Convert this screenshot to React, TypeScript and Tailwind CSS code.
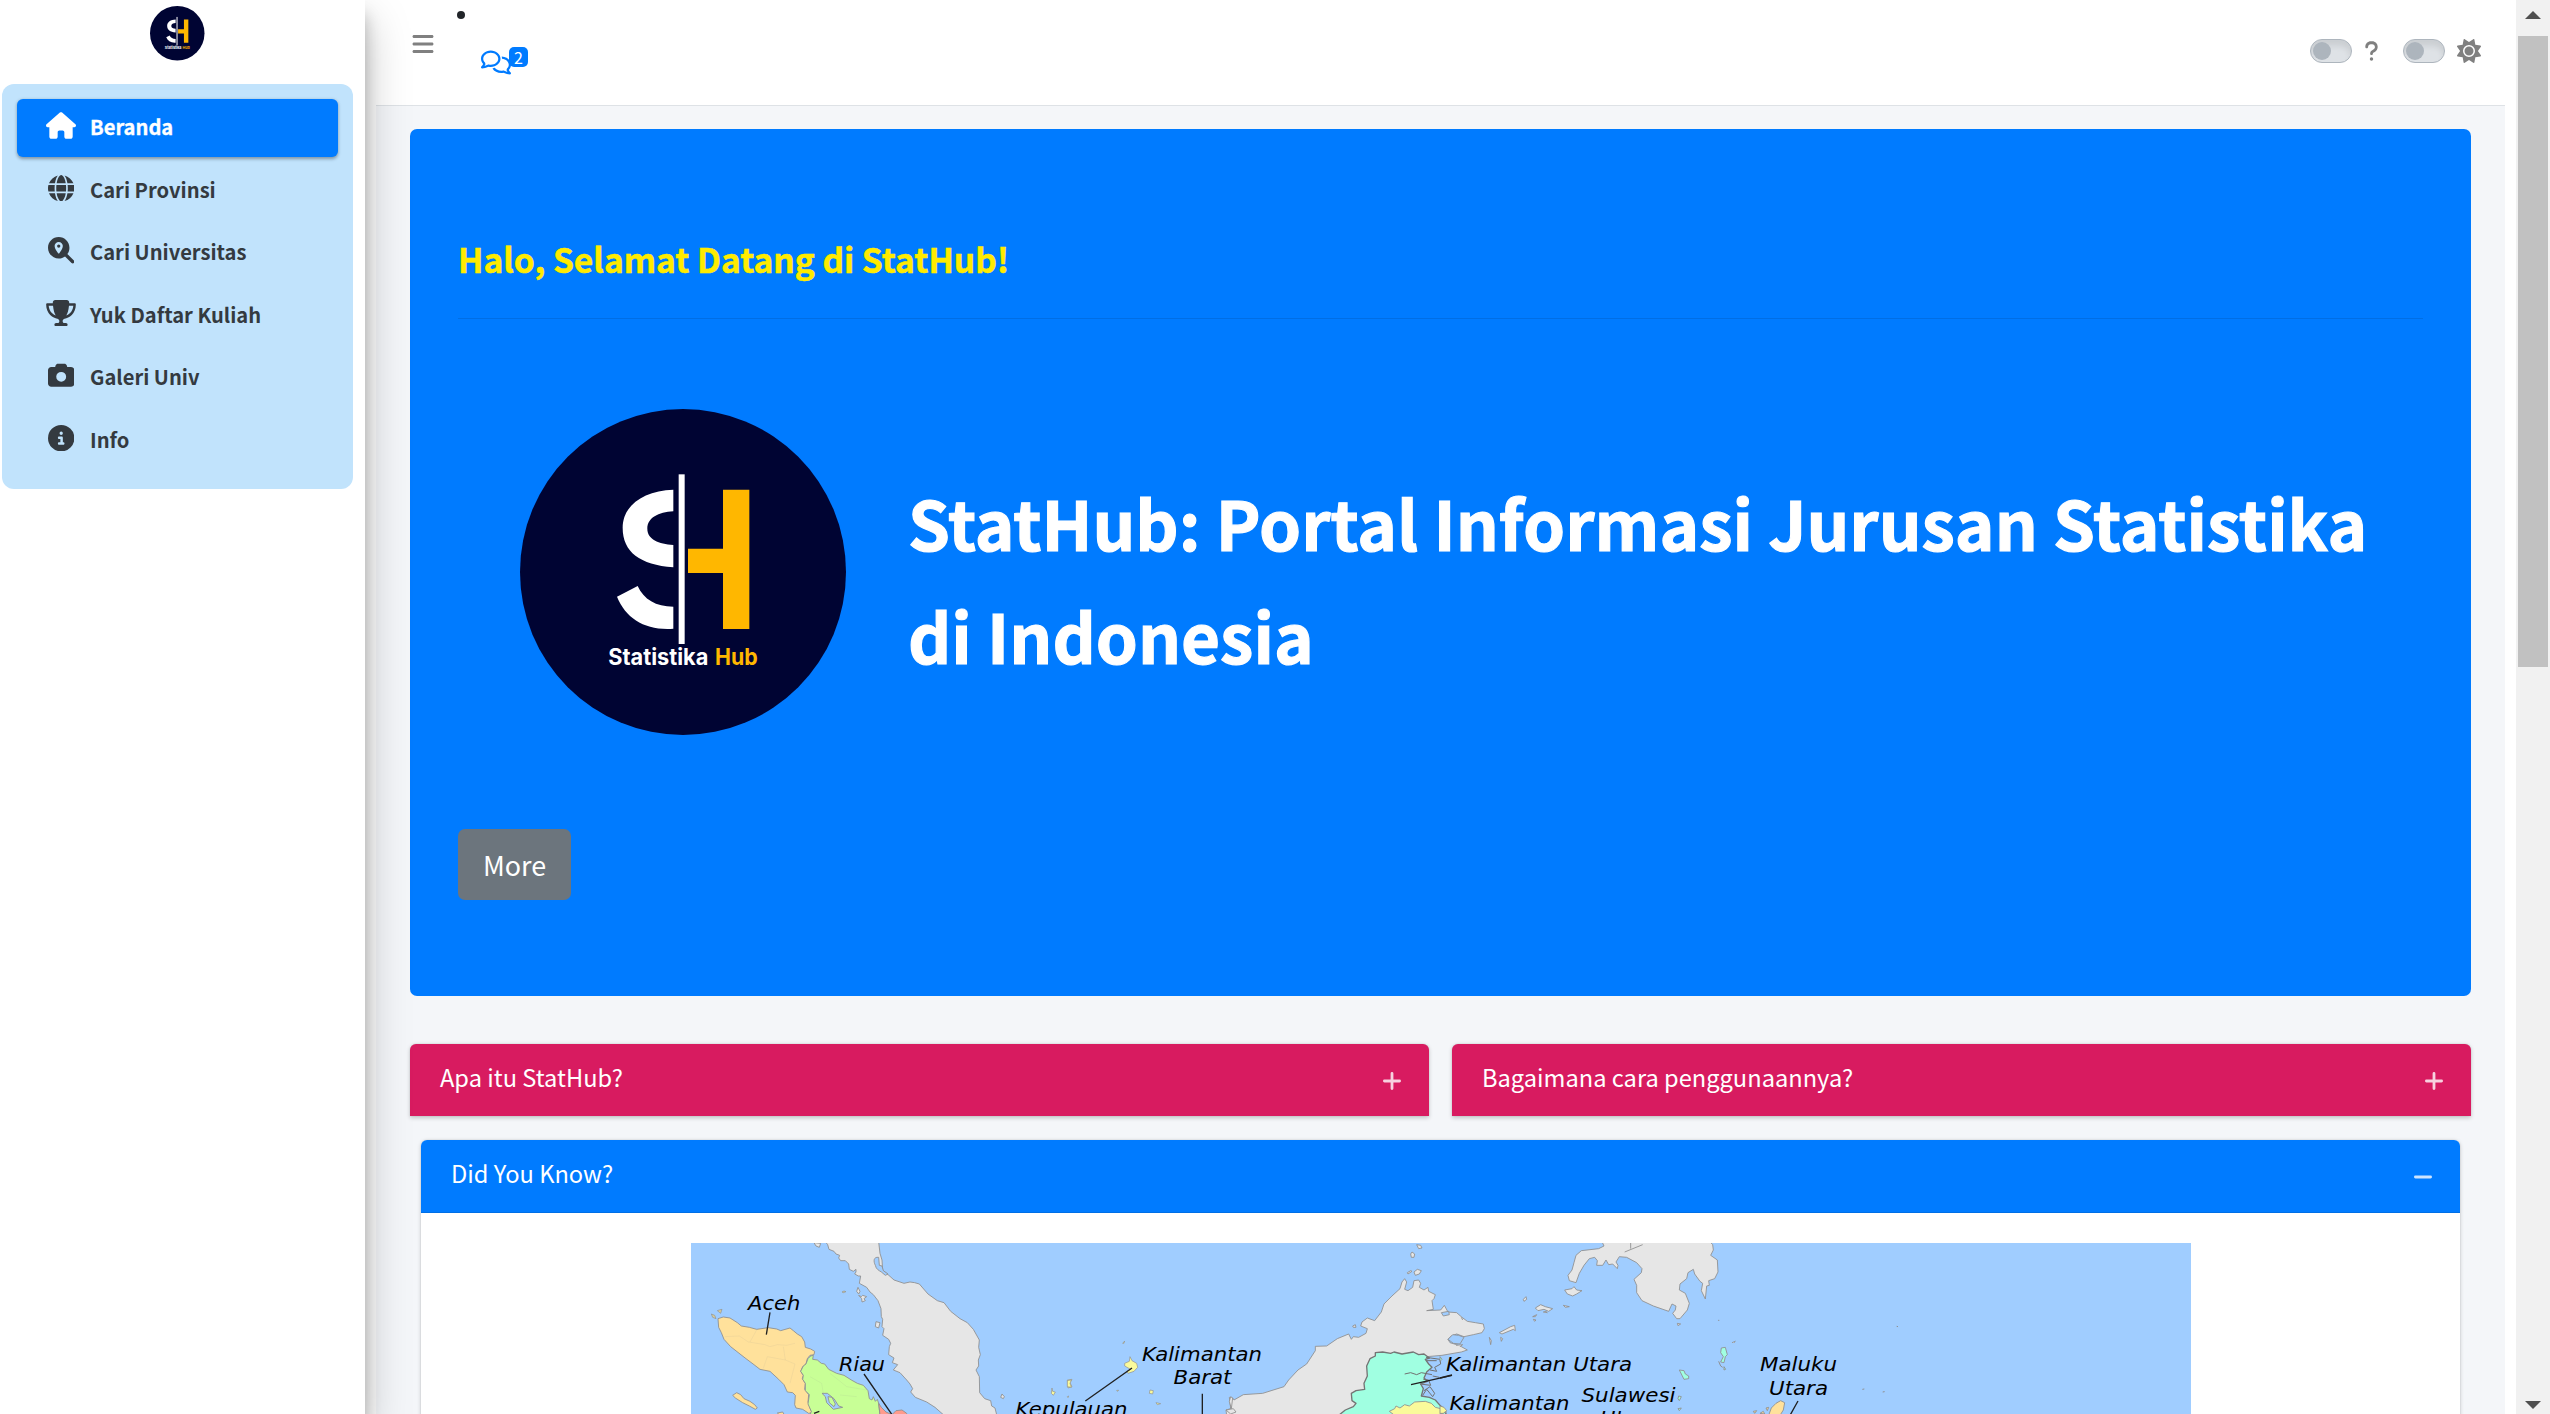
import type { ReactNode } from "react";
import {
  FaBars,
  FaCamera,
  FaCircleInfo,
  FaGlobe,
  FaHouse,
  FaMagnifyingGlassLocation,
  FaQuestion,
  FaRegComments,
  FaSun,
  FaTrophy,
} from "react-icons/fa6";

function Logo({ className }: { className: string }) {
  return (
    <svg viewBox="60 57 978 978" className={className} role="img" aria-label="Statistika Hub">
      <circle cx="549" cy="546" r="489" fill="#000433" />
      <path
        d="M520 299V364C475 366 442 384 442 416C442 448 476 462 520 465V532C420 524 368 486 368 413C368 346 432 301 520 299Z"
        fill="#fff"
      />
      <path d="M413 588C431 628 468 650 520 650V716C436 722 378 686 351 620Z" fill="#fff" />
      <rect x="536" y="253" width="18" height="509" fill="#fff" />
      <path d="M669 299H748V717H669V549H564V476H669Z" fill="#ffb700" />
      <g fontFamily="Inter, sans-serif" fontSize="67" fontWeight="700">
        <text x="325" y="825" textLength="300" lengthAdjust="spacingAndGlyphs" fill="#fff">
          Statistika
        </text>
        <text x="645" y="825" textLength="128" lengthAdjust="spacingAndGlyphs" fill="#ffb700">
          Hub
        </text>
      </g>
    </svg>
  );
}

const menu: { label: string; icon: ReactNode; active?: boolean }[] = [
  { label: "Beranda", icon: <FaHouse className="h-[27px] w-[30px]" />, active: true },
  { label: "Cari Provinsi", icon: <FaGlobe className="size-[26.4px]" /> },
  { label: "Cari Universitas", icon: <FaMagnifyingGlassLocation className="size-[26.4px]" /> },
  { label: "Yuk Daftar Kuliah", icon: <FaTrophy className="h-[26.4px] w-[30px]" /> },
  { label: "Galeri Univ", icon: <FaCamera className="size-[26.4px]" /> },
  { label: "Info", icon: <FaCircleInfo className="size-[26.4px]" /> },
];

function Sidebar() {
  return (
    <aside className="relative z-10 flex w-[365px] shrink-0 flex-col bg-white shadow-[0_21px_42px_rgba(0,0,0,0.25),0_15px_15px_rgba(0,0,0,0.22)]">
      <div className="flex h-[84px] w-[355px] justify-center pt-[6px]">
        <Logo className="size-[54.5px]" />
      </div>
      <nav className="ml-[2px] flex h-[405px] w-[351px] flex-col gap-[4.5px] rounded-xl bg-[#c1e3fc] p-[15px]">
        {menu.map((item) => (
          <a
            key={item.label}
            className={
              item.active
                ? "flex h-[58px] w-[321px] shrink-0 items-start rounded-[6px] bg-[#007bff] pl-[29px] text-white shadow-[0_1.5px_4.5px_rgba(0,0,0,0.12),0_1.5px_3px_rgba(0,0,0,0.24)] [-webkit-text-stroke:0.3px_currentColor]"
                : "flex h-[58px] w-[321px] shrink-0 items-start pl-[29px] text-[#343a40]"
            }
          >
            <span className="mt-[13px] -ml-[0.5px] flex h-[27px] w-[31px] items-center justify-center">{item.icon}</span>
            <span className="pl-[13.5px] text-[20.15px] leading-[56px] font-bold">{item.label}</span>
          </a>
        ))}
      </nav>
    </aside>
  );
}

function Toggle() {
  return (
    <span className="flex h-[24px] w-[42px] items-center rounded-full border-[1.5px] border-[#adb5bd] bg-[#dee2e6] pl-[2px] shadow-[inset_0_6px_6px_rgba(0,0,0,0.09)]">
      <span className="size-[18px] rounded-full bg-[#adb5bd]" />
    </span>
  );
}

function Navbar() {
  return (
    <header className="flex h-[106px] shrink-0 justify-between border-b border-[#dee2e6] bg-white">
      <div className="flex">
        <FaBars className="mt-[32px] ml-[35px] size-[24px] text-[#808080]" />
        <span className="mt-[11px] ml-[22px] size-[8px] rounded-full bg-[#212529]" />
        <div className="relative mt-[49px] ml-[16px] h-[26px] w-[48px] text-[#007bff]">
          <FaRegComments className="mt-px h-[25px] w-[30px]" />
          <span className="absolute -top-[2px] left-[28px] h-[20px] w-[19px] rounded-[5px] bg-[#007bff] text-center text-[16px] leading-[20px] text-white">
            2
          </span>
        </div>
      </div>
      <div className="flex h-[102px] items-center pr-[24px] text-[#808080]">
        <Toggle />
        <FaQuestion className="ml-[12px] h-[22px] w-[15px]" />
        <span className="w-[24px]" />
        <Toggle />
        <FaSun className="ml-[12px] size-[24px]" />
      </div>
    </header>
  );
}

function Sign({ minus }: { minus?: boolean }) {
  return (
    <svg viewBox="0 0 18 18" className="mt-[2px] size-[18px]" stroke="#fff" strokeOpacity="0.8" strokeWidth="2.8" strokeLinecap="round">
      <path d={minus ? "M1.4 9H16.6" : "M1.4 9H16.6M9 1.4V16.6"} />
    </svg>
  );
}

function InfoCard({ title }: { title: string }) {
  return (
    <section className="flex h-[72px] w-[1019px] items-center justify-between rounded-t-[6px] bg-[#d81b60] pr-[28px] pl-[30px] text-white shadow-[0_1.5px_4.5px_rgba(0,0,0,0.2),0_0_1.5px_rgba(0,0,0,0.125)]">
      <h3 className="h-[72px] text-[23.65px] leading-[66px]">{title}</h3>
      <Sign />
    </section>
  );
}

function MapLabel({ x, y, w, children }: { x: number; y: number; w: number; children: string }) {
  return (
    <text x={x} y={y} textLength={w} lengthAdjust="spacingAndGlyphs">
      {children}
    </text>
  );
}

function IndonesiaMap() {
  return (
    <svg viewBox="691 1243 1500 171" className="h-[171px] w-[1500px] shrink-0 bg-[#a0cdff]" stroke="#8f8f8f" strokeWidth="2.6" strokeLinejoin="round">
      {/* Sumatra and the Malay peninsula */}
      <g transform="translate(680 1230) scale(0.33333)">
        <path fill="#e6e6e6" d="M436 35L443 44L447 58L462 64L468 72L479 76L476 84L482 92L496 92L506 102L508 118L520 124L528 118V126L524 132L535 138L542 138L538 160L560 172L570 186L580 194L594 212L603 236L604 260L608 268L606 290L612 296L608 316L626 328L632 340L628 350L626 374L642 384L637 398L653 404L640 420L660 428L680 450L690 462L698 476L692 486L706 502L740 516L765 532L790 554H950L945 534L935 528L932 512L914 506L899 488L898 440L888 420L896 408L895 390L901 374L896 352L898 330L880 298L862 278L840 266L812 244L792 218L772 212L744 192L718 162L704 158L690 156L672 160L642 150L622 132L608 120L606 90L600 70L596 35Z" />
        <path fill="#a0cdff" d="M596 82C580 80 580 94 586 106C588 118 598 122 604 126L616 136L624 132L610 122L606 108L598 106Z" />
        <path fill="#e6e6e6" d="M402 38L408 48L418 52L422 40ZM534 172L530 184L536 192L540 184ZM536 196L545 206L546 216L556 212L552 206L560 200L548 196L544 200ZM588 275L586 290L596 294L600 278ZM966 492L962 502L970 506L973 500Z" />
        <path fill="#ffe19b" d="M114 266L130 261L150 264L172 278L184 288L208 292L230 298L265 293L290 297L302 302L330 294L340 302L352 312L365 320L374 336L376 352L392 357L404 364L402 374L390 376L382 386L378 402L368 410L362 424L370 436L367 446L376 460L374 478L386 494L384 516L390 534L396 548L386 550L368 538L348 534L344 524L346 496L338 488L322 486L312 464L296 448L270 424L240 418L222 404L198 386L180 372L152 350L132 328L124 308L116 292Z" />
        <path fill="#c8ff96" d="M390 556L394 544L384 522L388 494L376 482L376 460L368 448L370 436L362 424L370 408L378 402L384 386L392 378L400 376L398 388L412 390L424 400L434 402L446 418L470 430L492 436L514 450L532 460L550 466L564 482L568 506L576 510L580 500L586 514L592 508L596 520L600 556Z" />
        <path fill="#a0cdff" d="M426 490L442 490L462 506L476 528L488 532L460 538L440 518L436 500Z" />
        <path fill="#c8ff96" d="M444 500L456 502L466 522L462 530L448 518Z" />
        <path fill="#ff9b8c" d="M596 520L604 532L618 546L636 554H600ZM636 554L648 542L666 540L680 550V556Z" />
        <path fill="#ffe19b" d="M158 496L170 488L182 494L192 506L210 514L224 524L232 534L226 538L208 528L188 518L166 504ZM292 549L308 546L314 556H300Z" />
        <path fill="#d9cf9a" strokeWidth="2" d="M94 252L104 256L108 266L98 262ZM112 242L118 240L126 238L122 250ZM486 186L492 183L498 185L490 188Z" />
        <path fill="#fafa9b" strokeWidth="2" d="M1116 474L1118 484L1126 486L1120 496L1114 490ZM1162 450L1176 448L1170 458L1176 470L1164 474ZM1162 500L1166 498L1164 503Z" />
        <path fill="none" strokeWidth="2" strokeOpacity="0.15" d="M135 320L178 318L205 336L255 344L270 350L292 344L320 346L345 340M230 300L210 336M310 350L316 390L262 380M262 380L250 415M316 390L345 402L330 460M390 440L425 460L430 490M450 430L500 470L560 480M480 495L530 500" />
        <path stroke="#202020" strokeWidth="4" fill="none" d="M270 247L259 314M552 432L636 554M402 550L418 544" />
      </g>
      {/* Borneo */}
      <g transform="translate(1060 1230) scale(0.33333)">
        <path fill="#e6e6e6" d="M500 556L498 540L512 536L508 502L518 504L522 510L550 494L608 490L672 470L686 450L714 420L740 402L766 362V349L800 348L832 326L866 312L874 328L880 320L896 322L918 310L922 296L902 288L906 276L922 264L944 272L964 246L972 222L996 198L1020 176L1026 156L1034 146L1040 156L1034 178L1044 182L1058 172L1062 152L1076 150L1082 160L1078 172L1092 180L1104 172L1106 184L1126 194L1122 206L1116 212L1120 238L1100 242L1142 240L1153 226L1164 246L1190 248L1206 262L1222 274L1246 278L1270 282L1273 296L1266 308L1240 314L1212 320L1190 312L1174 318L1164 328L1170 338L1190 344L1204 350L1222 360L1204 366L1146 376L1100 380L950 556Z" />
        <path fill="#a0cdff" d="M1144 248L1166 244L1168 254L1150 258ZM1164 328L1178 314L1196 316L1212 322L1200 342L1180 340Z" />
        <path fill="#a0ffe1" stroke="#747474" strokeWidth="4" d="M836 556L856 540L880 530L888 520L876 512L874 490L888 482L914 478L912 460L922 438L920 408L930 386L946 378V368L968 366L992 370L1002 366L1026 372L1060 366L1076 374L1092 372L1108 384L1096 388L1106 402L1116 412L1100 426L1092 444L1102 454L1082 462L1090 476L1084 498L1108 502L1126 510L1140 526L1152 538L1160 556Z" />
        <path fill="#fafa9b" d="M1004 556L988 544L1004 536L1008 528L1020 534L1034 524L1048 528L1064 516L1096 514L1114 520L1126 532L1150 538L1160 546L1140 552L1130 556Z" />
        <path fill="none" stroke="#707070" strokeWidth="3" d="M1034 432L1052 428L1070 434L1084 428L1116 434M1098 382L1140 388L1142 402L1124 412L1130 424L1110 420M1080 462L1112 466L1106 450L1090 448M1092 482L1110 470L1124 490L1118 500L1100 478L1088 496M1118 438L1138 442M1100 392L1130 392" />
        <path fill="#e6e6e6" d="M1056 66L1064 72L1062 82L1054 82L1052 72ZM1070 44L1082 46L1086 54L1076 56ZM1062 126L1072 118L1084 122L1078 132L1066 136ZM1042 128L1052 122L1056 124L1044 132ZM878 288L886 284L888 292L880 292ZM512 500L518 504L514 536L508 514ZM498 540L520 536L528 546L512 552Z" />
        <path fill="#fafa9b" strokeWidth="2" d="M210 380L216 392L230 400L233 412L222 424L204 430L200 424L212 418L194 408V400L208 394ZM22 452L34 450L30 460L34 472L22 470ZM270 480L280 482L278 492L268 490ZM170 481H176L172 484ZM288 518L302 521L292 524ZM188 340L194 333L192 340Z" />
        <path stroke="#202020" strokeWidth="4" d="M216 414L76 513M427 491V556M1053 464L1176 436" />
      </g>
      {/* Mindanao and the eastern islands */}
      <g transform="translate(1440 1230) scale(0.33333)">
        <path fill="#e6e6e6" d="M486 35L492 48L476 56L424 62L408 76L402 98L396 120L384 136L388 152L408 158L418 130L432 106L448 86L464 82L472 92L470 106L488 106L498 90L506 104L518 102L532 116L534 106L528 96L538 80L560 82L590 98L606 116L604 128L582 148L590 166V188L606 212L640 228L686 244L696 222L708 228L706 240L698 250L710 266L720 266L742 240L748 220L736 190L718 180L720 162L740 146L744 128L760 118L764 132L780 154L788 160L784 182L796 207L800 168L808 166L806 152L824 146L834 126L832 90L812 76L820 60L818 44L810 35Z" />
        <path fill="none" d="M554 66L608 44M572 35V56" />
        <path fill="#e6e6e6" d="M374 180L396 176L402 170L410 180L426 182L410 192L398 198L382 192ZM286 234L302 224L316 230L338 236L326 244L312 238L294 242ZM310 246L318 244L322 248ZM250 208L258 200L260 208L252 214ZM370 226L388 230L376 232ZM278 260L290 254L286 260ZM280 268L288 270L284 274ZM178 308L212 290L224 286L226 302L220 298L186 312ZM148 322L154 332L152 344ZM182 322L188 326L184 334ZM712 280L722 282L714 287ZM834 271H838M876 338L886 334L882 338M64 262L68 270M48 346L68 344L60 350" />
        <path fill="#a0ffe1" d="M844 354L856 352L862 374L856 380L852 398L842 396L850 380L842 368ZM852 410L857 418L852 420ZM718 420L732 422L736 432L746 438V446L732 448ZM716 498L724 500L718 512L714 506ZM714 536L724 534L718 542ZM0 380L6 388L0 394Z" />
        <path fill="none" d="M836 394L842 408L848 412M1370 289L1374 290M1267 478L1273 477M1328 486L1334 485" strokeWidth="3" />
        <path fill="#fafa9b" d="M0 528L12 532L20 542L10 550H0Z" />
        <path fill="#ffe19b" d="M1008 520L1022 512L1034 518L1030 540L1020 556H986L994 534ZM940 544L950 542L944 550ZM960 550L970 544L974 552ZM978 534L986 532L982 542Z" />
        <path stroke="#202020" strokeWidth="4" d="M0 444L36 435M1074 513L1050 556" />
      </g>
      <g fill="#000" stroke="none" fontFamily="DejaVu Sans, sans-serif" fontSize="19" fontStyle="italic">
        <MapLabel x={748} y={1310} w={52.5}>Aceh</MapLabel>
        <MapLabel x={839} y={1370.5} w={46}>Riau</MapLabel>
        <MapLabel x={1015.5} y={1415.5} w={112}>Kepulauan</MapLabel>
        <MapLabel x={1142} y={1361} w={120}>Kalimantan</MapLabel>
        <MapLabel x={1173.5} y={1384} w={58}>Barat</MapLabel>
        <MapLabel x={1446} y={1371} w={186}>Kalimantan Utara</MapLabel>
        <MapLabel x={1449.5} y={1410} w={120}>Kalimantan</MapLabel>
        <MapLabel x={1581.5} y={1402} w={94}>Sulawesi</MapLabel>
        <MapLabel x={1600} y={1425} w={58}>Utara</MapLabel>
        <MapLabel x={1760} y={1371} w={77}>Maluku</MapLabel>
        <MapLabel x={1769} y={1394.5} w={59}>Utara</MapLabel>
      </g>
    </svg>
  );
}

function Scrollbar() {
  return (
    <div className="flex w-[34px] shrink-0 flex-col items-center bg-[#f1f1f1]">
      <svg viewBox="0 0 16 8" className="mt-[11px] h-[8px] w-[16px]" fill="#505050">
        <path d="M0 8L8 0L16 8Z" />
      </svg>
      <div className="mt-[17px] h-[631px] w-[30px] bg-[#c1c1c1]" />
      <svg viewBox="0 0 16 8" className="mt-auto mb-[5px] h-[8px] w-[16px]" fill="#505050">
        <path d="M0 0L8 8L16 0Z" />
      </svg>
    </div>
  );
}

export default function App() {
  return (
    <div className="flex h-[1414px] w-[2550px] overflow-hidden bg-white font-['Noto_Sans_CJK_SC',sans-serif]">
      <Sidebar />
      <div className="ml-[11px] flex w-[2129px] shrink-0 flex-col bg-[#f4f6f9]">
        <Navbar />
        <main className="flex flex-col pt-[23px] pl-[34px]">
          <section className="flex h-[867px] w-[2061px] flex-col rounded-[7px] bg-[#007bff] px-[48px] pt-[96px]">
            <h2 className="h-[93px] text-[33.55px] leading-[68px] font-bold text-[#ffeb00] [-webkit-text-stroke:0.5px_currentColor]">
              Halo, Selamat Datang di StatHub!
            </h2>
            <hr className="border-t-[1.5px] border-black/10" />
            <div className="mt-[90px] flex h-[326px] items-start pl-[62px]">
              <Logo className="size-[326px] shrink-0" />
              <h1 className="mt-[56px] ml-[62px] w-[1500px] text-[67.3px] leading-[113px] font-bold text-white [-webkit-text-stroke:1.1px_currentColor]">
                StatHub: Portal Informasi Jurusan Statistika
                <br />
                di Indonesia
              </h1>
            </div>
            <button className="mt-[94px] h-[71px] w-[113px] rounded-[7px] bg-[#6c757d] text-[26.9px] leading-[71px] text-white">
              More
            </button>
          </section>
          <div className="mt-[48px] flex gap-[23px]">
            <InfoCard title="Apa itu StatHub?" />
            <InfoCard title="Bagaimana cara penggunaannya?" />
          </div>
          <section className="mt-[24px] ml-[11px] flex h-[280px] w-[2039px] flex-col rounded-t-[6px] bg-white shadow-[0_1.5px_4.5px_rgba(0,0,0,0.2),0_0_1.5px_rgba(0,0,0,0.125)]">
            <div className="flex h-[73px] items-center justify-between rounded-t-[6px] border-b border-[#006fe6] bg-[#007bff] pr-[28px] pl-[30px] text-white">
              <h3 className="h-[72px] text-[23.65px] leading-[66px]">Did You Know?</h3>
              <Sign minus />
            </div>
            <div className="flex justify-center pt-[30px]">
              <IndonesiaMap />
            </div>
          </section>
        </main>
      </div>
      <div className="ml-[11px] flex">
        <Scrollbar />
      </div>
    </div>
  );
}
